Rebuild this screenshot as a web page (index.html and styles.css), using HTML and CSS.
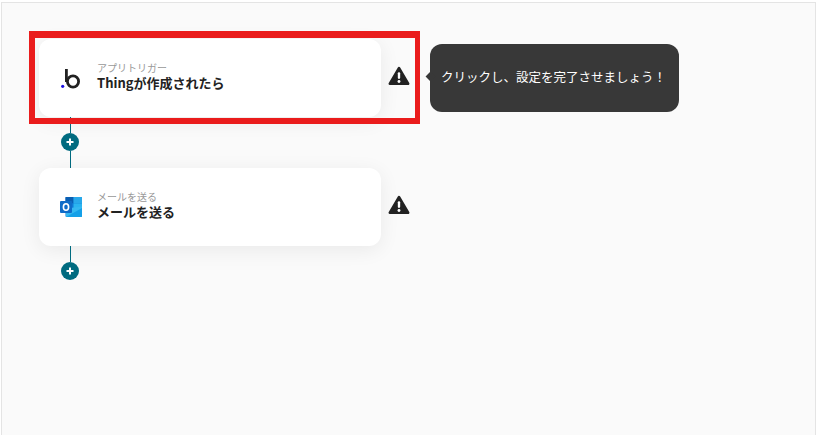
FILE: index.html
```html
<!DOCTYPE html>
<html lang="ja">
<head>
<meta charset="utf-8">
<title>フロー</title>
<link rel="stylesheet" href="styles.css">
</head>
<body>
<main class="panel">
  <section class="flow">
    <div class="row">
      <article class="card">
        <svg class="app-icon" viewBox="0 0 24 24" width="24" height="24" aria-hidden="true">
          <path d="M7.400 3V16" fill="none" stroke="#222" stroke-width="2.800"/>
          <circle cx="14" cy="15.500" r="5.600" fill="none" stroke="#222" stroke-width="2.800"/>
          <circle cx="3.700" cy="20.300" r="1.600" fill="#1a10e0"/>
        </svg>
        <div class="labels">
          <span class="kind">アプリトリガー</span>
          <span class="name">Thingが作成されたら</span>
        </div>
      </article>
      <svg class="warn" viewBox="0 0 24 22" width="22" height="20" aria-hidden="true">
        <path d="M12 2.5 22 19.5H2Z" fill="#222" stroke="#222" stroke-width="3" stroke-linejoin="round"/>
        <rect x="10.7" y="6.8" width="2.6" height="7.4" rx="1.2" fill="#fff"/>
        <circle cx="12" cy="17" r="1.6" fill="#fff"/>
      </svg>
      <div class="tip">クリックし、設定を完了させましょう！</div>
    </div>
    <div class="link">
      <span class="line short"></span>
      <span class="add"><svg viewBox="0 0 10 10" width="10" height="10" aria-hidden="true"><path d="M5 1.500v7M1.500 5h7" stroke="#fff" stroke-width="2"/></svg></span>
      <span class="line"></span>
    </div>
    <div class="row">
      <article class="card">
        <svg class="app-icon" viewBox="0 0 24 24" width="24" height="24" aria-hidden="true">
          <rect x="6.500" y="2" width="16.500" height="20" rx="1" fill="#0f78d4"/>
          <rect x="6.500" y="2" width="8" height="6.500" fill="#0a5fb3"/>
          <rect x="14.500" y="2" width="8.500" height="6.500" fill="#28a8ea"/>
          <rect x="6.500" y="8.500" width="8" height="6.500" fill="#0f78d4"/>
          <rect x="14.500" y="8.500" width="8.500" height="6.500" fill="#2ab4f0"/>
          <path d="M7 13.500 23 11.500V21a1 1 0 0 1-1 1H7Z" fill="#35b8f1"/>
          <path d="M7 22 23 13V21a1 1 0 0 1-1 1Z" fill="#14a0e8"/>
          <rect x="1" y="6" width="12" height="12" rx="1" fill="#0f6cc8"/>
          <ellipse cx="7" cy="12" rx="2.600" ry="3.300" fill="none" stroke="#fff" stroke-width="1.600"/>
        </svg>
        <div class="labels">
          <span class="kind">メールを送る</span>
          <span class="name">メールを送る</span>
        </div>
      </article>
      <svg class="warn" viewBox="0 0 24 22" width="22" height="20" aria-hidden="true">
        <path d="M12 2.5 22 19.5H2Z" fill="#222" stroke="#222" stroke-width="3" stroke-linejoin="round"/>
        <rect x="10.7" y="6.8" width="2.6" height="7.4" rx="1.2" fill="#fff"/>
        <circle cx="12" cy="17" r="1.6" fill="#fff"/>
      </svg>
    </div>
    <div class="link">
      <span class="line short"></span>
      <span class="add"><svg viewBox="0 0 10 10" width="10" height="10" aria-hidden="true"><path d="M5 1.500v7M1.500 5h7" stroke="#fff" stroke-width="2"/></svg></span>
    </div>
  </section>
  <div class="highlight"></div>
</main>
</body>
</html>
```

FILE: styles.css
```css
* { box-sizing: border-box; }
html, body { margin: 0; height: 100%; background: #fff; overflow: hidden; }
body {
  font-family: "Noto Sans CJK JP", "Noto Sans", "Liberation Sans", sans-serif;
  padding: 2px 15px 0 1px;
}
.panel {
  position: relative;
  height: 433px;
  background: #fafafa;
  border-top: 1px solid #e4e4e4;
  border-left: 1px solid #e4e4e4;
  border-right: 1px solid #e4e4e4;
}
.flow { padding: 36px 0 0 37px; }
.row { display: flex; align-items: center; }
.card {
  width: 342px;
  height: 78px;
  background: #fff;
  border-radius: 12px;
  box-shadow: 0 4px 20px rgba(0, 0, 0, 0.07);
  display: flex;
  align-items: center;
  padding-left: 20px;
}
.app-icon { flex: none; }
.labels { display: flex; flex-direction: column; margin: 0 0 3px 14px; }
.kind { font-size: 10px; line-height: 12px; color: #999; }
.name { font-size: 13px; line-height: 18px; font-weight: 700; color: #222; }
.warn { flex: none; margin: 0 0 4px 7px; }
.tip {
  position: relative;
  margin-left: 20px;
  width: 249px;
  height: 68px;
  background: #383838;
  border-radius: 12px;
  color: #fff;
  font-size: 12.500px;
  line-height: 65px;
  padding-left: 11px;
  white-space: nowrap;
}
.tip::before {
  content: "";
  position: absolute;
  left: -3px;
  top: 29px;
  width: 7px;
  height: 7px;
  background: #383838;
  transform: rotate(45deg);
}
.link {
  width: 18px;
  margin-left: 22px;
  display: flex;
  flex-direction: column;
  align-items: center;
}
.line { width: 1px; height: 17px; background: #006b80; }
.line.short { height: 16px; }
.add {
  width: 18px;
  height: 18px;
  border-radius: 50%;
  background: #006b80;
  display: flex;
  align-items: center;
  justify-content: center;
}
.highlight {
  position: absolute;
  left: 27px;
  top: 28px;
  width: 391px;
  height: 93px;
  border: 6px solid #ea1c1c;
  border-top-width: 7px;
  border-right-width: 5px;
  pointer-events: none;
}
```
